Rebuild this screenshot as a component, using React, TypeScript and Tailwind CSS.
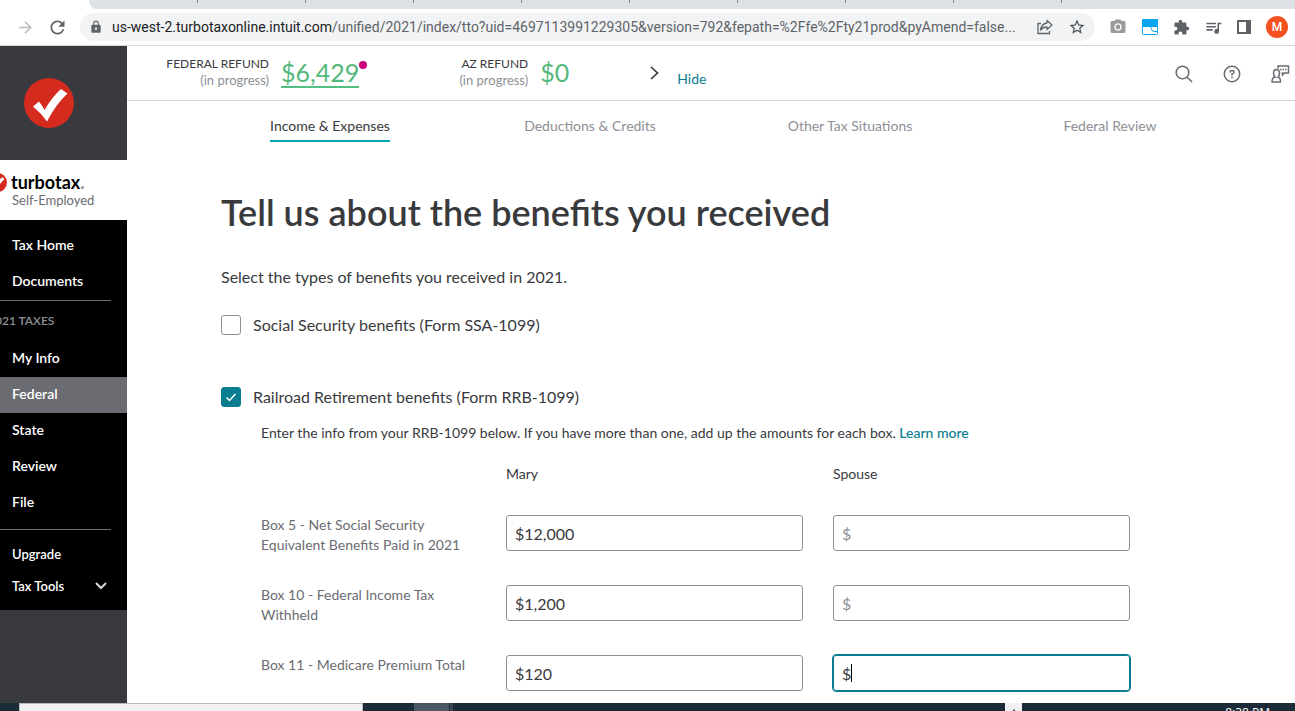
"use client"

import { useState } from "react"
import {
  MdArrowForward,
  MdRefresh,
  MdLock,
  MdStarBorder,
  MdCameraAlt,
  MdExtension,
  MdQueueMusic
} from "react-icons/md"

const tabs = ["Income & Expenses", "Deductions & Credits", "Other Tax Situations", "Federal Review"]

const taxLinks = ["My Info", "Federal", "State", "Review", "File"]

const boxes = [
  { id: "box5", label: "Box 5 - Net Social Security Equivalent Benefits Paid in 2021", mary: "$12,000" },
  { id: "box10", label: "Box 10 - Federal Income Tax Withheld", mary: "$1,200" },
  { id: "box11", label: "Box 11 - Medicare Premium Total", mary: "$120", active: true }
]

function CheckLogo({ className }: { className: string }) {
  return (
    <svg viewBox="0 0 50 50" className={className}>
      <circle cx="25" cy="25" r="25" fill="#d52b1e"/>
      <path d="M9 28.5 L15 23.5 Q18.5 28 20.5 32 Q28 19 37 11 L43.5 15.5 Q32 26 23 43.5 Q17 35 9 28.5 Z" fill="#fff"/>
    </svg>
  )
}

function BrowserBar() {
  return (
    <header className="border-b border-[#d5d7db] bg-white font-['Roboto',sans-serif]">

      {/* TAB STRIP */}

      <div className="ml-[89px] h-[9px] bg-[#dee1e6] rounded-bl-lg flex pl-[108px] gap-[107px] overflow-hidden">
        {[0, 1, 2, 3, 4, 5, 6, 7, 8].map((n) => (
          <span key={n} className="w-px h-[3px] shrink-0 bg-[#80868b]"/>
        ))}
      </div>

      <div className="h-9 flex items-center pl-4 pr-[7px]">

        <button aria-label="Forward" className="text-[#babcbe]">
          <MdArrowForward size={19}/>
        </button>

        <button aria-label="Reload" className="ml-3 text-[#5f6368]">
          <MdRefresh size={21}/>
        </button>

        <div className="ml-3 h-7 flex-1 min-w-0 rounded-full bg-[#f1f3f4] flex items-center px-[9px]">
          <MdLock size={14} className="text-[#5f6368] shrink-0"/>
          <p className="ml-[9px] flex-1 min-w-0 truncate text-sm text-[#5f6368]">
            <span className="text-[#202124]">us-west-2.turbotaxonline.intuit.com</span>/unified/2021/index/tto?uid=4697113991229305&amp;version=792&amp;fepath=%2Ffe%2Fty21prod&amp;pyAmend=false...
          </p>
          <button aria-label="Share" className="ml-3">
            <svg width="16" height="16" viewBox="0 0 16 16" fill="none" stroke="#5f6368" strokeWidth="1.3">
              <path d="M4 4.500 H1 V14.500 H12.500 V12"/>
              <path d="M10 1.500 L15 6 L10 10.500 V8 C7 8 5 9 3.500 11 C4 7.500 6.500 4.500 10 4 Z" strokeLinejoin="round"/>
            </svg>
          </button>
          <button aria-label="Bookmark" className="ml-[15px] text-[#4b4f54]">
            <MdStarBorder size={18}/>
          </button>
        </div>

        <div className="ml-[14px] flex items-center gap-[15px] text-[#5f6368]">
          <MdCameraAlt size={18} className="text-[#9b9b9b]"/>
          <svg width="16" height="16" viewBox="0 0 16 16">
            <rect x="0.5" y="0.5" width="15" height="15" rx="1" fill="#fff" stroke="#0aa5f0"/>
            <path d="M0 8 V1 Q0 0 1 0 H15 Q16 0 16 1 V8 Z" fill="#0aa5f0"/>
            <path d="M8 8 Q9 8 9.500 10 Q10 12.500 12 12.500 H16" fill="none" stroke="#0aa5f0"/>
          </svg>
          <MdExtension size={17}/>
          <MdQueueMusic size={19} className="-mx-px"/>
          <svg width="14" height="14" viewBox="0 0 14 14">
            <path d="M0 0 H14 V14 H0 Z M2 2 V12 H9 V2 Z" fill="#5f6368" fillRule="evenodd"/>
          </svg>
          <button className="w-[22px] h-[22px] rounded-full bg-[#f4511e] text-white text-xs font-medium">
            M
          </button>
        </div>

      </div>
    </header>
  )
}

function Sidebar() {
  return (
    <aside className="w-[127px] shrink-0 overflow-hidden bg-[#393a3d] text-sm font-semibold text-white">

      <div className="h-[114px] pt-8 pl-6">
        <CheckLogo className="w-[50px] h-[50px]"/>
      </div>

      {/* PRODUCT */}

      <div className="h-[60px] bg-white pt-[11px] text-black">
        <div className="flex items-center h-[22px] -ml-3">
          <CheckLogo className="w-[19px] h-[19px] shrink-0"/>
          <span className="ml-1 text-lg leading-6 font-bold">turbotax<span className="text-[#8d9096]">.</span></span>
        </div>
        <p className="pl-3 text-[13px] leading-[14px] font-normal text-[#6b6c72]">Self-Employed</p>
      </div>

      {/* NAV */}

      <nav className="bg-black pt-[7px] pb-2">
        <a href="#" className="block pl-3 leading-9">Tax Home</a>
        <a href="#" className="block pl-3 leading-9">Documents</a>
        <hr className="mt-px mr-4 border-[#6b6c72]"/>
        <p className="-ml-3 h-10 leading-10 text-xs text-[#8d9096]">2021 TAXES</p>

        {taxLinks.map((link) => (
          <a
            key={link}
            href="#"
            className={link === "Federal" ? "block h-9 pl-3 leading-[34px] bg-[#6b6c72]" : "block h-9 pl-3 leading-[34px]"}
          >
            {link}
          </a>
        ))}

        <hr className="mt-2 mb-2 mr-4 border-[#6b6c72]"/>
        <a href="#" className="block pl-3 text-[13px] leading-8">Upgrade</a>
        <button className="w-full pl-3 pr-5 flex items-center justify-between text-[13px] leading-8">
          Tax Tools
          <svg width="12" height="8" viewBox="0 0 12 8" fill="none" stroke="#d4d7dc" strokeWidth="2">
            <path d="M1 1 L6 6 L11 1"/>
          </svg>
        </button>
      </nav>

    </aside>
  )
}

function RefundBar() {
  return (
    <div className="h-[55px] border-b border-[#d4d7dc] flex items-start pl-[39px] text-[13px] whitespace-nowrap">

      <p className="pt-[9px] w-[103px] text-right leading-[17px] text-[#8d9096]">
        <span className="block text-xs leading-[17px] text-[#393a3d]">FEDERAL REFUND</span>
        (in progress)
      </p>
      <button className="relative ml-3 mt-3 h-[30px] border-b-2 border-[#53c081] text-[25px] leading-7 text-[#53b87b]">
        $6,429
        <span className="absolute top-[3px] -right-2 w-2 h-2 rounded-full bg-[#c9007a]"/>
      </button>

      <p className="ml-[66px] pt-[9px] w-[103px] text-right leading-[17px] text-[#8d9096]">
        <span className="block text-xs leading-[17px] text-[#393a3d]">AZ REFUND</span>
        (in progress)
      </p>
      <p className="ml-3 mt-3 text-[25px] leading-7 text-[#53b87b]">$0</p>

      <button aria-label="Next refund" className="ml-[81px] mt-5">
        <svg width="9" height="14" viewBox="0 0 9 14" fill="none" stroke="#393a3d" strokeWidth="1.700">
          <path d="M1 1 L7.500 7 L1 13"/>
        </svg>
      </button>
      <a href="#" className="ml-[18px] mt-[23px] text-sm leading-5 text-[#077d8f]">Hide</a>

      {/* TOOLS */}

      <div className="ml-auto mt-[19px] pr-[5px] flex items-center">
        <button aria-label="Search">
          <svg width="18" height="18" viewBox="0 0 18 18" fill="none" stroke="#6b6c72" strokeWidth="1.600">
            <circle cx="7.500" cy="7.500" r="6.300"/>
            <path d="M12 12 L17 17"/>
          </svg>
        </button>
        <button aria-label="Help" className="ml-[30px]">
          <svg width="18" height="18" viewBox="0 0 18 18" fill="none" stroke="#6b6c72" strokeWidth="1.500">
            <circle cx="9" cy="9" r="7.700"/>
            <path d="M7 7.500 Q7 5.500 9 5.500 Q11 5.500 11 7.200 Q11 8.500 9 9 V10.500 M9 11.600 V13.200"/>
          </svg>
        </button>
        <button aria-label="Live help" className="ml-[29px]">
          <svg width="20" height="18" viewBox="0 0 20 18" fill="none" stroke="#6b6c72" strokeWidth="1.500">
            <path d="M6.500 4.500 Q9.500 4.500 9.500 8 Q9.500 10.500 8 12 Q10.500 12.500 10.500 17 H2 Q2 12.500 5 12 Q3.500 10.500 3.500 8 Q3.500 4.500 6.500 4.500 Z"/>
            <path d="M8 3.500 V1 H18.500 V8 H14.500 L12.500 10 V8 H11.500"/>
            <path d="M10 4.500 H17" strokeDasharray="1.500 1"/>
          </svg>
        </button>
      </div>

    </div>
  )
}

function BenefitsForm() {

  const [ssa, setSsa] = useState(false)
  const [rrb, setRrb] = useState(true)

  const boxClass = "w-5 h-5 appearance-none rounded-[3px] border border-[#8d9096] bg-white checked:border-[#077d8f] checked:bg-[#077d8f]"

  return (
    <main className="pl-[94px] pr-[165px] pb-3 text-[#393a3d]">

      <h1 className="mt-[47px] text-4xl leading-[46px] font-semibold">
        Tell us about the benefits you received
      </h1>
      <p className="mt-[30px] text-base leading-6">Select the types of benefits you received in 2021.</p>

      <div className="mt-6 h-6 flex items-center gap-3">
        <input id="ssa" type="checkbox" checked={ssa} onChange={(e) => setSsa(e.target.checked)} className={boxClass}/>
        <label htmlFor="ssa" className="text-base leading-6">Social Security benefits (Form SSA-1099)</label>
      </div>

      <div className="mt-12 h-6 flex items-center gap-3">
        <span className="relative flex">
          <input id="rrb" type="checkbox" checked={rrb} onChange={(e) => setRrb(e.target.checked)} className={boxClass}/>
          <svg viewBox="0 0 20 20" className="absolute inset-0 pointer-events-none" fill="none" stroke="#fff" strokeWidth="1.500">
            <path d="M5.500 10.500 L8.500 13.500 L14.500 7"/>
          </svg>
        </span>
        <label htmlFor="rrb" className="text-base leading-6">Railroad Retirement benefits (Form RRB-1099)</label>
      </div>

      <div className="pl-10 text-sm leading-5">

        <p className="mt-[14px]">
          Enter the info from your RRB-1099 below. If you have more than one, add up the amounts for each box.{" "}
          <a href="#" className="text-[#077d8f] font-medium">Learn more</a>
        </p>

        {/* AMOUNTS */}

        <div className="mt-[21px] grid grid-cols-[215px_1fr_1fr] gap-x-[30px]">
          <span/>
          <span>Mary</span>
          <span>Spouse</span>
        </div>

        <div className="mt-[31px] grid gap-[30px]">
          {boxes.map((box) => (
            <div key={box.id} className="grid grid-cols-[215px_1fr_1fr] gap-x-[30px] items-start">
              <label htmlFor={box.id} className="text-[#6b6c72]">{box.label}</label>
              <input
                id={box.id}
                defaultValue={box.mary}
                className="w-full min-w-0 h-9 rounded-[3px] border border-[#8d9096] px-2 text-base focus:outline-none"
              />
              {box.active ? (
                <div className="relative">
                  <input
                    aria-label={box.label + " Spouse"}
                    defaultValue="$"
                    className="w-full min-w-0 h-9 rounded-[3px] border border-[#077d8f] outline outline-[#077d8f] px-2 text-base"
                  />
                  <span className="absolute left-[18px] top-[9px] w-px h-[18px] bg-black"/>
                </div>
              ) : (
                <input
                  aria-label={box.label + " Spouse"}
                  placeholder="$"
                  className="w-full min-w-0 h-9 rounded-[3px] border border-[#8d9096] px-2 text-base placeholder:text-[#8d9096] focus:outline-none"
                />
              )}
            </div>
          ))}
        </div>

      </div>

    </main>
  )
}

function Taskbar() {
  return (
    <footer className="h-2 shrink-0 overflow-hidden bg-[#1c2b38] flex items-start">
      <div className="ml-[19px] w-[344px] h-4 bg-[#f1f1f1] border border-[#b9b9b9]"/>
      <div className="ml-[51px] w-[35px] h-4 bg-[#4a5663]"/>
      <div className="ml-px w-[3px] h-4 bg-[#3c4956]"/>
      <div className="ml-auto w-[17px] h-4 bg-[#f1f1f1] flex justify-center pt-[6px]">
        <svg width="6" height="4" viewBox="0 0 6 4">
          <path d="M0 4 L3 0 L6 4 Z" fill="#505050"/>
        </svg>
      </div>
      <span className="ml-[203px] mr-[25px] pt-[2px] text-xs leading-4 text-white font-['Open_Sans',sans-serif]">8:38 PM</span>
    </footer>
  )
}

export default function App() {
  return (
    <div className="min-h-screen flex flex-col overflow-hidden bg-white font-['Lato',sans-serif]">

      <BrowserBar/>

      <div className="flex flex-1">

        <Sidebar/>

        <div className="flex-1 min-w-0">

          <RefundBar/>

          {/* SECTION TABS */}

          <nav className="pl-[73px] pr-[55px] grid grid-cols-4 justify-items-center text-sm text-[#8d9096]">
            {tabs.map((tab, i) => (
              <a
                key={tab}
                href="#"
                className={i === 0
                  ? "mt-[14px] h-[27px] leading-[22px] border-b-2 border-[#00a6b5] text-[#393a3d]"
                  : "mt-[14px] h-[27px] leading-[22px]"}
              >
                {tab}
              </a>
            ))}
          </nav>

          <BenefitsForm/>

        </div>

      </div>

      <Taskbar/>

    </div>
  )
}
